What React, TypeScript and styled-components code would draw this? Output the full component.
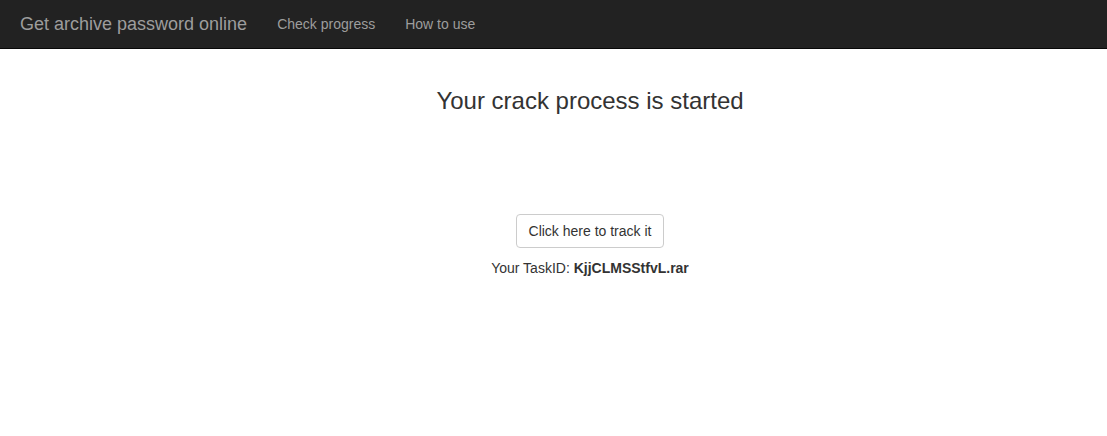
import React from "react";
import styled, { createGlobalStyle } from "styled-components";

const Global = createGlobalStyle`
  html, body { margin: 0; padding: 0; background: #fff; }
  body {
    font-family: "Liberation Sans", Arial, Helvetica, sans-serif;
    font-size: 14px;
    line-height: 1.42857;
    color: #333;
  }
  * { box-sizing: border-box; }
`;

const Navbar = styled.nav`
  display: flex;
  align-items: center;
  height: 49px;
  background: #222;
  border-bottom: 1px solid #080808;
  padding-left: 5px;
`;

const Brand = styled.a`
  padding: 15px;
  font-size: 18px;
  line-height: 20px;
  color: #9d9d9d;
  text-decoration: none;
`;

const NavList = styled.ul`
  display: flex;
  list-style: none;
  margin: 0;
  padding: 0;
`;

const NavLink = styled.a`
  display: block;
  padding: 15px;
  font-size: 14px;
  line-height: 20px;
  color: #9d9d9d;
  text-decoration: none;
`;

const Main = styled.main`
  display: flex;
  flex-direction: column;
  align-items: center;
  padding-left: 73px;
  padding-top: 39px;
`;

const Title = styled.h3`
  margin: 0;
  font-size: 24px;
  font-weight: 500;
  line-height: 1.1;
  color: #333;
`;

const Button = styled.button`
  margin-top: 100px;
  padding: 6px 12px;
  font-family: inherit;
  font-size: 14px;
  line-height: 20px;
  color: #333;
  background: #fff;
  border: 1px solid #ccc;
  border-radius: 4px;
  cursor: pointer;
`;

const TaskLine = styled.p`
  margin: 11px 0 0;
`;

export default function App() {
  return (
    <>
      <Global />
      <Navbar>
        <Brand href="#">Get archive password online</Brand>
        <NavList>
          <li><NavLink href="#">Check progress</NavLink></li>
          <li><NavLink href="#">How to use</NavLink></li>
        </NavList>
      </Navbar>
      <Main>
        <Title>Your crack process is started</Title>
        <Button>Click here to track it</Button>
        <TaskLine>
          Your TaskID: <b>KjjCLMSStfvL.rar</b>
        </TaskLine>
      </Main>
    </>
  );
}
